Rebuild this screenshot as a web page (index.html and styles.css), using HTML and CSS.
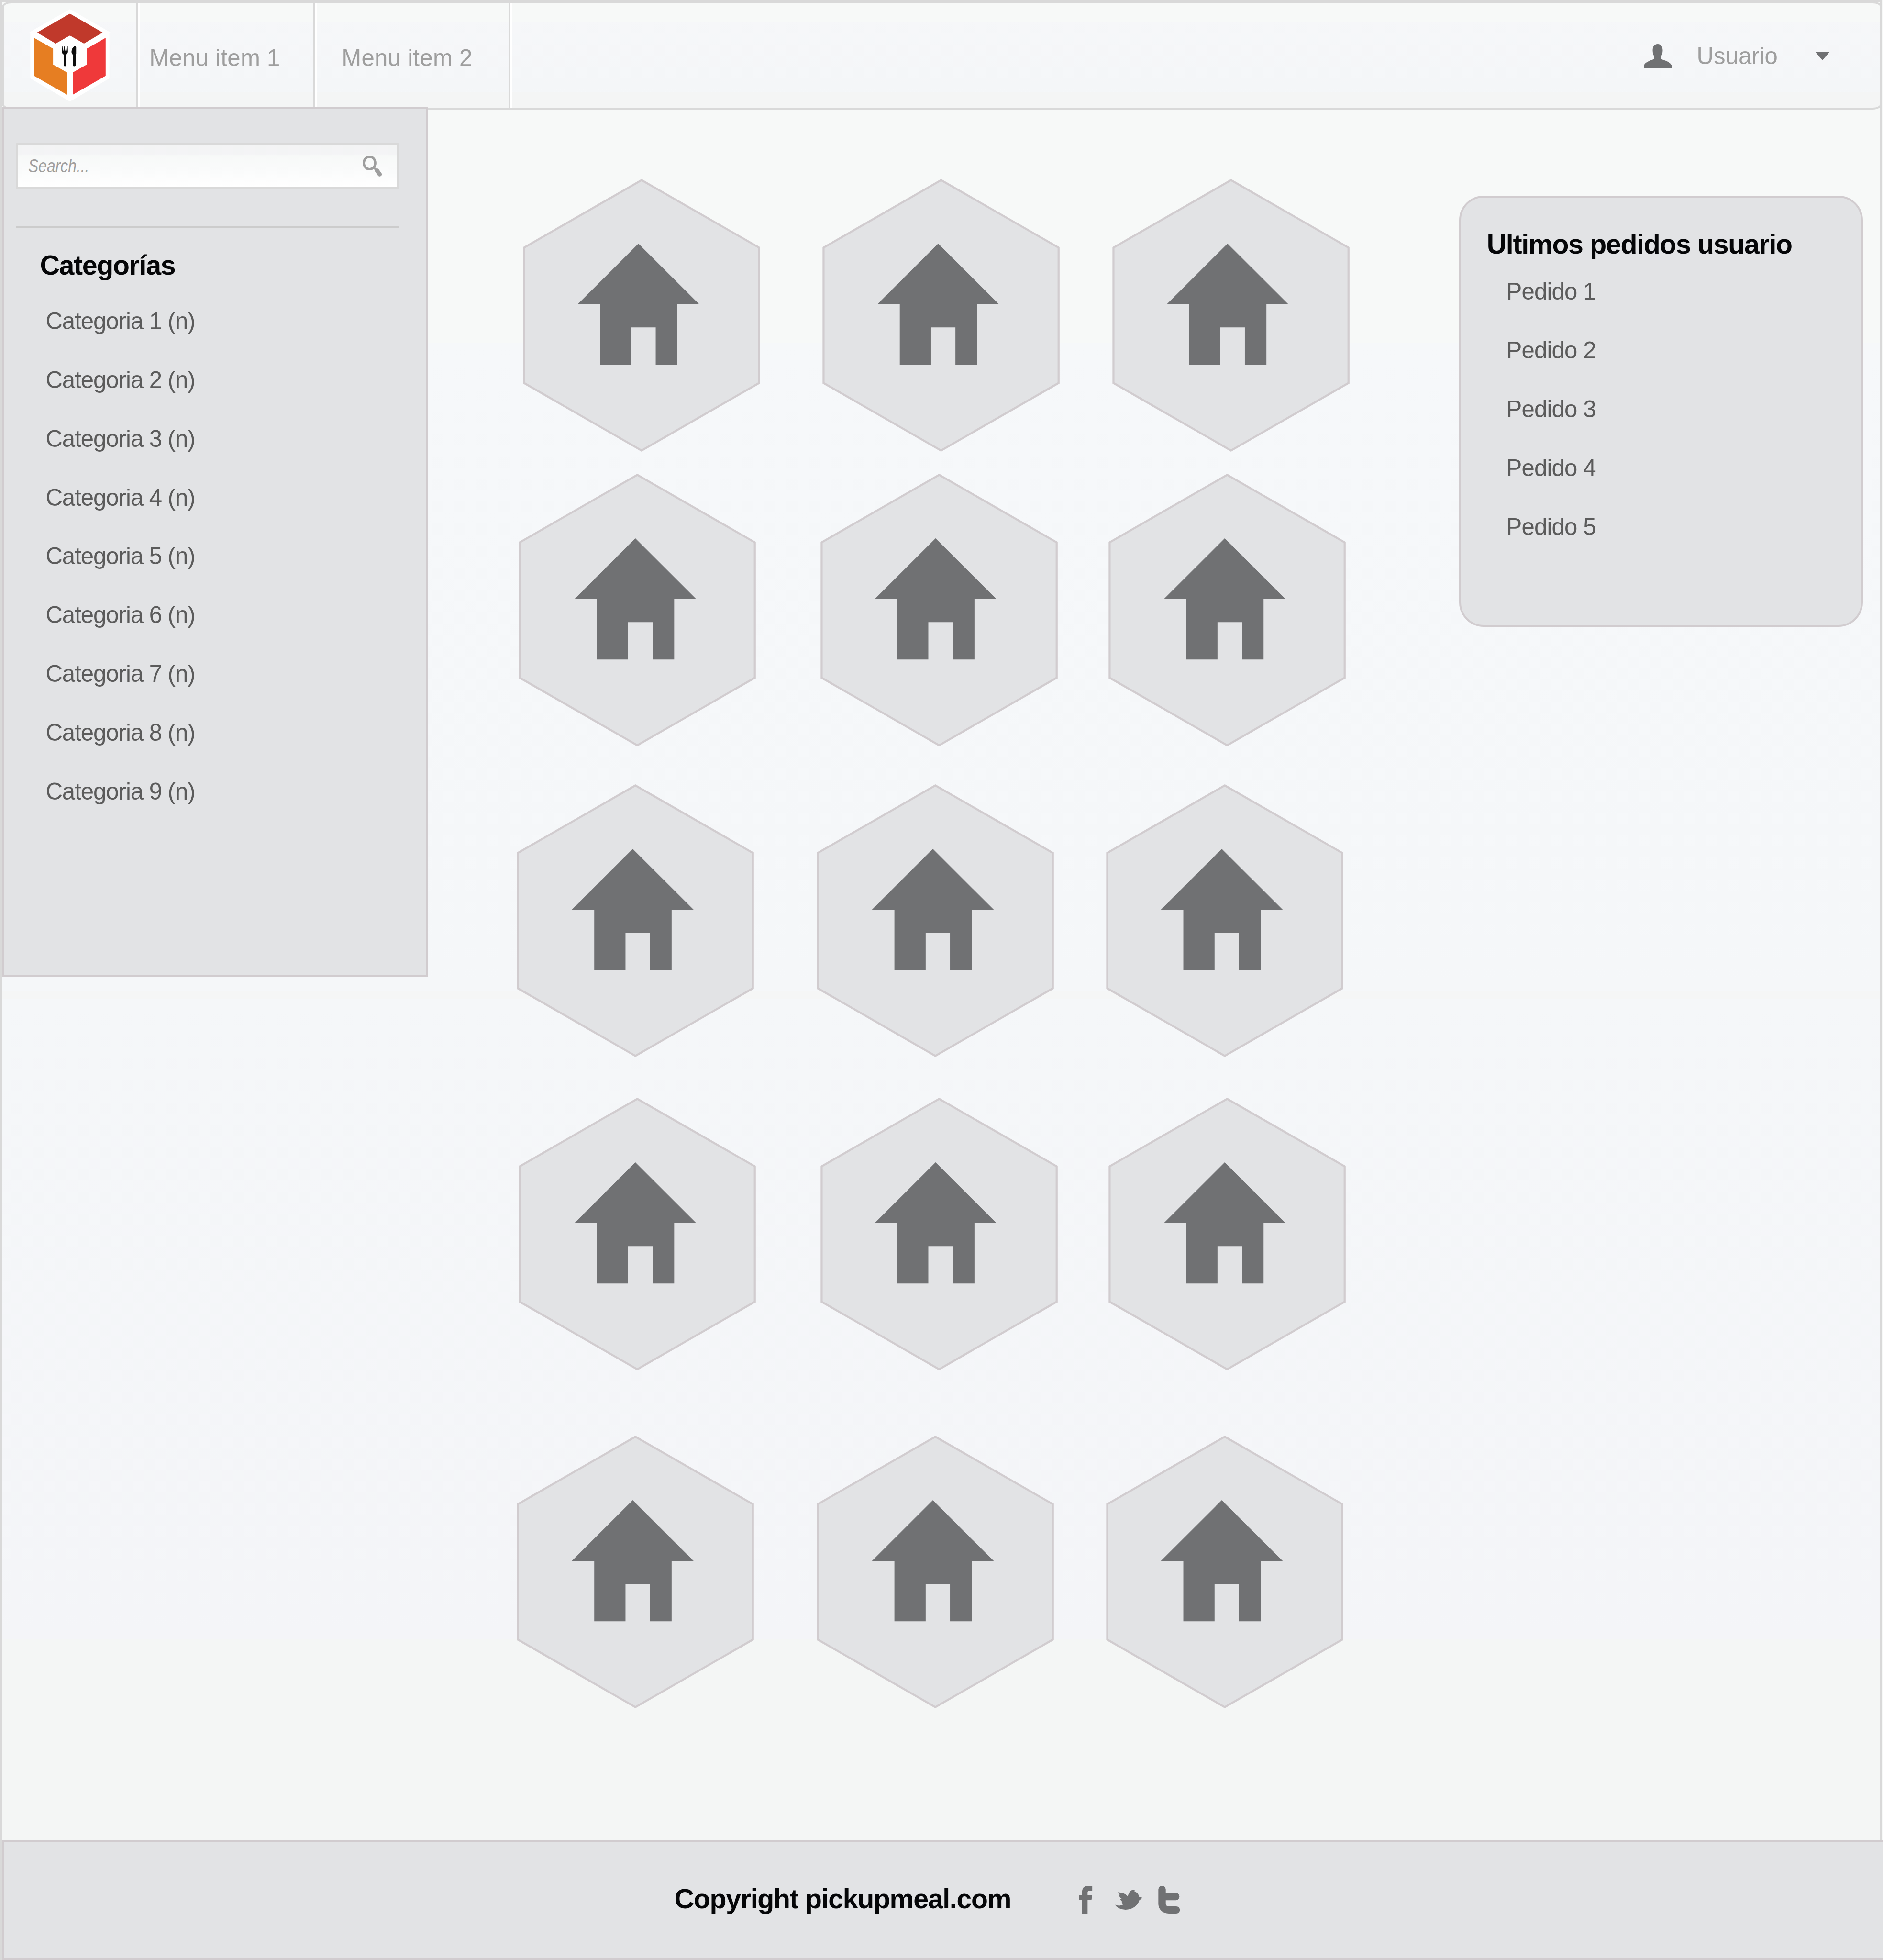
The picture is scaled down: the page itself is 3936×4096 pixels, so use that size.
FILE: index.html
```html
<!DOCTYPE html>
<html lang="es">
<head>
<meta charset="utf-8">
<title>pickupmeal.com</title>
<link rel="stylesheet" href="styles.css">
</head>
<body>
<svg class="sprite" aria-hidden="true">
  <defs>
    <path id="hexagon" d="M0 -287.6L250 -144V144L0 287.6L-250 144V-144Z"/>
    <path id="house" d="M0 0L129.5 129.3H82.7V257.7H36.7V178.3H-15.4V257.7H-81.8V129.3H-129.5Z"/>
  </defs>
</svg>
<div class="page">
  <header class="topbar">
    <a class="brand" href="#" aria-label="pickupmeal">
      <svg class="logo" viewBox="185 55 520 600">
        <path fill="#fff" d="M445 59L697 203L705 208L697 213V500L445 648L192 500V213L186 208L192 203Z"/>
        <path fill="#c0392b" d="M445 87L654 208L535 278L445 227L354 278L235 208Z"/>
        <path fill="#e67e22" d="M216 241L338 311V412L427 463V605L216 484Z"/>
        <path fill="#ef393a" d="M673 241L552 311V412L463 463V605L673 484Z"/>
        <path fill="#0d0d0d" d="M397 294H400L403 323H405L409 294H412L414 323H416L419 294H422L425 323H427L429 294H431L432 332Q431 342 422 348V416Q421 423 413.500 423Q406 423 405 416V348Q395 342 394 332Z"/>
        <path fill="#0d0d0d" d="M478 294Q485 294 485 301V342Q485 346 482 348V416Q481 423 472.500 423Q464 423 463 416V348Q455 343 455 332C456 314 465 296 478 294Z"/>
      </svg>
    </a>
    <a class="menu-item menu-first" href="#">Menu item 1</a>
    <a class="menu-item menu-second" href="#">Menu item 2</a>
    <div class="user">
      <svg class="user-icon" viewBox="0 0 59.500 52"><path d="M29.600 0C37 0 40.200 6 40.200 13.500C40.200 19 39 23 36.700 26V32C48 35.500 59.500 40 59.500 47.500V52H0V47.500C0 40 11 35.500 22.400 32V26C20 23 18.900 19 18.900 13.500C18.900 6 22 0 29.600 0Z"/></svg>
      <span class="user-name">Usuario</span>
      <svg class="caret" viewBox="0 0 29.400 17.300"><path d="M0 0H29.400L14.700 17.300Z"/></svg>
    </div>
  </header>

  <div class="content">
    <nav class="sidebar">
      <div class="search">
        <span class="search-hint">Search...</span>
        <svg class="search-icon" viewBox="0 0 41 45">
          <ellipse cx="14.700" cy="15.800" rx="12.200" ry="13.300" fill="none" stroke="#9e9e9e" stroke-width="5"/>
          <path d="M23 25L30 32" stroke="#9e9e9e" stroke-width="4.500"/>
          <path d="M30.500 32L36.300 40" stroke="#9e9e9e" stroke-width="9" stroke-linecap="round"/>
        </svg>
      </div>
      <hr class="divider">
      <h2 class="title">Categorías</h2>
      <ul class="links categories">
        <li>Categoria 1 (n)</li>
        <li>Categoria 2 (n)</li>
        <li>Categoria 3 (n)</li>
        <li>Categoria 4 (n)</li>
        <li>Categoria 5 (n)</li>
        <li>Categoria 6 (n)</li>
        <li>Categoria 7 (n)</li>
        <li>Categoria 8 (n)</li>
        <li>Categoria 9 (n)</li>
      </ul>
    </nav>

    <main class="tiles">
      <div class="row row-1">
        <svg class="tile" viewBox="-252.500 -290 505 580"><use href="#hexagon" class="hex"/><use href="#house" class="house" x="-6.700" y="-152.600"/></svg>
        <svg class="tile" viewBox="-252.500 -290 505 580"><use href="#hexagon" class="hex"/><use href="#house" class="house" x="-6.100" y="-152.600"/></svg>
        <svg class="tile" viewBox="-252.500 -290 505 580"><use href="#hexagon" class="hex"/><use href="#house" class="house" x="-7.300" y="-152.600"/></svg>
      </div>
      <div class="row row-2">
        <svg class="tile" viewBox="-252.500 -290 505 580"><use href="#hexagon" class="hex"/><use href="#house" class="house" x="-4.100" y="-152.600"/></svg>
        <svg class="tile" viewBox="-252.500 -290 505 580"><use href="#hexagon" class="hex"/><use href="#house" class="house" x="-7.600" y="-152.600"/></svg>
        <svg class="tile" viewBox="-252.500 -290 505 580"><use href="#hexagon" class="hex"/><use href="#house" class="house" x="-5.200" y="-152.600"/></svg>
      </div>
      <div class="row row-3">
        <svg class="tile" viewBox="-252.500 -290 505 580"><use href="#hexagon" class="hex"/><use href="#house" class="house" x="-5.600" y="-152.600"/></svg>
        <svg class="tile" viewBox="-252.500 -290 505 580"><use href="#hexagon" class="hex"/><use href="#house" class="house" x="-5.200" y="-152.600"/></svg>
        <svg class="tile" viewBox="-252.500 -290 505 580"><use href="#hexagon" class="hex"/><use href="#house" class="house" x="-6.300" y="-152.600"/></svg>
      </div>
      <div class="row row-4">
        <svg class="tile" viewBox="-252.500 -290 505 580"><use href="#hexagon" class="hex"/><use href="#house" class="house" x="-4.100" y="-152.600"/></svg>
        <svg class="tile" viewBox="-252.500 -290 505 580"><use href="#hexagon" class="hex"/><use href="#house" class="house" x="-7.600" y="-152.600"/></svg>
        <svg class="tile" viewBox="-252.500 -290 505 580"><use href="#hexagon" class="hex"/><use href="#house" class="house" x="-5.200" y="-152.600"/></svg>
      </div>
      <div class="row row-5">
        <svg class="tile" viewBox="-252.500 -290 505 580"><use href="#hexagon" class="hex"/><use href="#house" class="house" x="-5.600" y="-152.600"/></svg>
        <svg class="tile" viewBox="-252.500 -290 505 580"><use href="#hexagon" class="hex"/><use href="#house" class="house" x="-5.200" y="-152.600"/></svg>
        <svg class="tile" viewBox="-252.500 -290 505 580"><use href="#hexagon" class="hex"/><use href="#house" class="house" x="-6.300" y="-152.600"/></svg>
      </div>
    </main>

    <aside class="orders">
      <h2 class="title">Ultimos pedidos usuario</h2>
      <ul class="links">
        <li>Pedido 1</li>
        <li>Pedido 2</li>
        <li>Pedido 3</li>
        <li>Pedido 4</li>
        <li>Pedido 5</li>
      </ul>
    </aside>
  </div>

  <footer class="footer">
    <p class="copyright">Copyright pickupmeal.com</p>
    <svg class="social facebook" viewBox="105 93 87 177"><path d="M126 270V183H106V153H126V132Q127 94 163 94H191V124H171Q161 125 161 135V153H190L186 183H161V270Z"/></svg>
    <svg class="social bird" viewBox="333 118 177 128"><path d="M333 213Q347 220 363 220Q381 219 394 208Q382 208 376 201L384 195Q372 192 368 177L378 176Q364 169 361 152L368 153Q356 146 355 134Q400 139 418 162C419 140 434 120 453 119Q459 118 461 122L457 127Q483 136 490 165Q500 167 510 163Q507 169 500 172Q504 175 506 174Q503 181 491 183C483 219 447 246 402 246Q356 245 333 213Z"/></svg>
    <svg class="social tee" viewBox="612 93 138 177"><path d="M613 116A23.500 23.500 0 0 1 660 116V138H724A23 23 0 0 1 724 185H660V206Q661 224 679 224H727A23 23 0 0 1 727 270H680C640 270 613 243 613 206Z"/></svg>
  </footer>
</div>
</body>
</html>
```
FILE: styles.css
```css
/* 1rem equals 100 design units */
html {
  font-size: 98.2526px;
  overflow: hidden;
}

body {
  margin: 0;
  background: #f7f9f8;
  font-family: "Liberation Sans", Arial, sans-serif;
}

* { box-sizing: border-box; }

svg {
  display: block;
  flex: none;
}

.sprite {
  position: absolute;
  width: 0;
  height: 0;
}

.page {
  display: flex;
  flex-direction: column;
  width: 40.04rem;
  height: 41.69rem;
  border: 4px solid #d9d9d9;
  border-bottom: 0;
  background: linear-gradient(#f7f9f8 0, #f7f9f8 7.25rem, #f6f8fa 7.25rem, #f5f7f9 21.03rem, #f5f6f6 21.03rem, #f5f6f6 21.2rem, #f5f7f9 21.2rem, #f4f5f8 34.82rem, #f4f6f5 34.82rem);
}

/* Top bar */
.topbar {
  display: flex;
  flex: none;
  height: 2.296rem;
  margin: -0.01rem -4px 0 0;
  border: 4px solid #d9d9d9;
  border-radius: 0.2rem / 0.12rem;
  background: linear-gradient(#f7f9f8 0, #f7f9f8 0.39rem, #f6f7f9 0.39rem, #f4f6f8 1.89rem, #f4f5f5 1.89rem);
}

.brand,
.menu-item {
  display: flex;
  flex: none;
  align-items: center;
  border-right: 4px solid #fff;
  box-shadow: inset -4px 0 #d9d9d9;
}

.brand {
  width: 2.897rem;
  align-items: flex-start;
  padding: 0.113rem 0 0 0.537rem;
}

.logo {
  width: 1.733rem;
  height: 2rem;
}

.menu-item {
  padding-top: 0.12rem;
  color: #9e9e9e;
  font-size: 0.5rem;
  letter-spacing: 0.003rem;
  line-height: 1;
  text-decoration: none;
  white-space: nowrap;
}

.menu-first {
  width: 3.771rem;
  padding-left: 0.2rem;
}

.menu-second {
  width: 4.147rem;
  padding-left: 0.52rem;
}

.user {
  display: flex;
  flex: 1;
  align-items: center;
  justify-content: flex-end;
  padding: 0.03rem 1.083rem 0 0;
  color: #9e9e9e;
  font-size: 0.5rem;
  line-height: 1;
}

.user-icon {
  width: 0.595rem;
  height: 0.52rem;
  fill: #707173;
}

.user-name {
  width: 2.529rem;
  padding-left: 0.535rem;
}

.caret {
  width: 0.294rem;
  height: 0.173rem;
  margin-left: 0.532rem;
  fill: #707173;
}

/* Content */
.content {
  display: flex;
  flex: none;
  align-items: flex-start;
  height: 36.802rem;
}

.sidebar {
  flex: none;
  width: 9.073rem;
  height: 18.503rem;
  margin-top: -0.046rem;
  padding: 0.72rem 0 0 0.256rem;
  border: 4px solid #d1cccf;
  background: #e2e3e5;
}

.search {
  display: flex;
  align-items: center;
  justify-content: space-between;
  width: 8.147rem;
  height: 0.977rem;
  padding: 0 0.32rem 0 0.22rem;
  border: 4px solid #d9d9d9;
  border-radius: 2px;
  background: linear-gradient(#f3f4f4, #f4f4f6 22%, #f7f9f8 25%, #fafbfb 60%, #fff);
}

.search-hint {
  color: #9e9e9e;
  font-size: 0.4rem;
  font-style: italic;
  line-height: 1;
  transform: scaleX(0.81);
  transform-origin: left;
}

.search-icon {
  width: 0.41rem;
  height: 0.45rem;
}

.divider {
  width: 8.147rem;
  height: 4px;
  margin: 0.797rem 0 0;
  border: 0;
  background: #ccc;
}

.title {
  margin: 0.483rem 0 0 0.512rem;
  color: #050608;
  font-size: 0.583rem;
  font-weight: bold;
  letter-spacing: -0.0134rem;
  line-height: 0.6rem;
  white-space: nowrap;
}

.links {
  margin: 0;
  padding: 0;
  color: #5b5b5b;
  font-size: 0.5rem;
  letter-spacing: -0.0085rem;
  line-height: 1.25rem;
  list-style: none;
}

.categories {
  margin: 0.272rem 0 0 0.634rem;
  letter-spacing: -0.0105rem;
}

/* Tiles */
.tiles {
  display: flex;
  flex: 1;
  flex-direction: column;
  padding-top: 1.482rem;
}

.row { display: flex; }

.row-1 { margin-left: 2.008rem; }
.row-2 { margin: 0.464rem 0 0 1.92rem; }
.row-3 { margin: 0.811rem 0 0 1.879rem; }
.row-4 { margin: 0.867rem 0 0 1.92rem; }
.row-5 { margin: 1.386rem 0 0 1.879rem; }

.tile {
  width: 5.05rem;
  height: 5.8rem;
  margin-right: 1.327rem;
  overflow: visible;
}

.tile:nth-child(2) { margin-right: 1.115rem; }
.tile:last-child { margin-right: 0; }

.row-2 .tile:first-child,
.row-4 .tile:first-child { margin-right: 1.367rem; }
.row-2 .tile:nth-child(2),
.row-4 .tile:nth-child(2) { margin-right: 1.08rem; }

.hex {
  fill: #e2e3e5;
  stroke: #d1cccf;
  stroke-width: 4.3;
}

.house { fill: #707173; }

/* Latest orders */
.orders {
  flex: none;
  width: 8.59rem;
  height: 9.17rem;
  margin: 1.837rem 0.368rem 0 0;
  padding-left: 0.549rem;
  border: 4px solid #d1cccf;
  border-radius: 0.52rem;
  background: #e2e3e5;
}

.orders .title { margin: 0.688rem 0 0; }
.orders .links { margin: 0.09rem 0 0 0.415rem; }

/* Footer */
.footer {
  display: flex;
  flex: none;
  align-items: center;
  height: 2.558rem;
  margin-right: -0.1rem;
  padding-left: 14.267rem;
  border: 4px solid #d1cccf;
  background: #e2e3e5;
}

.copyright {
  width: 8.606rem;
  margin: 0;
  padding-bottom: 0.04rem;
  color: #050608;
  font-size: 0.583rem;
  font-weight: bold;
  letter-spacing: -0.0134rem;
  line-height: 1;
  white-space: nowrap;
}

.social { fill: #707173; }

.facebook {
  width: 0.29rem;
  height: 0.59rem;
}

.bird {
  width: 0.59rem;
  height: 0.427rem;
  margin-left: 0.467rem;
}

.tee {
  width: 0.46rem;
  height: 0.59rem;
  margin-left: 0.34rem;
}
```
